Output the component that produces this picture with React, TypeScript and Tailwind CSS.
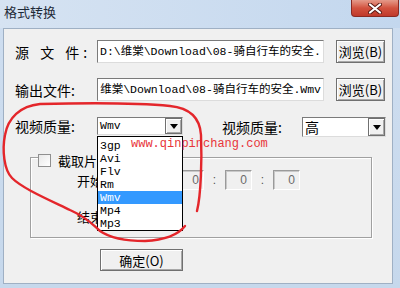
import React from 'react'

const cjk = "font-['Noto_Sans_CJK_SC',sans-serif]"
const mono = "font-['Liberation_Mono','Noto_Sans_CJK_SC',monospace]"
const sunken = 'border border-t-[#7a7a7a] border-l-[#7a7a7a] border-r-[#dcdcdc] border-b-[#dcdcdc] bg-white'
const raised = 'border border-[#707070] bg-[#f0f0f0] shadow-[inset_1px_1px_0_#ffffff,inset_-1px_-1px_0_#a8a8a8]'

const formats = ['3gp', 'Avi', 'Flv', 'Rm', 'Wmv', 'Mp4', 'Mp3']

function Arrow() {
  return (
    <div className={`${raised} w-[17px] h-full flex items-center justify-center`}>
      <svg width="8" height="5" viewBox="0 0 8 5">
        <path d="M0 0 H8 L4 5 Z" fill="#000" />
      </svg>
    </div>
  )
}

function TimeBox() {
  return (
    <div className="w-[27px] h-[20px] border border-t-[#9a9a9a] border-l-[#9a9a9a] border-r-white border-b-white shadow-[inset_1px_1px_0_#c8c8c8] flex items-center justify-end pr-[4px] text-[12px] leading-none text-[#6a6a6a] font-['Liberation_Sans',sans-serif]">
      0
    </div>
  )
}

function Colon() {
  return <span className="w-[21px] text-center text-[12px] text-[#555] font-['Liberation_Sans',sans-serif]">:</span>
}

export default function App() {
  return (
    <div className="relative w-[400px] h-[288px] overflow-hidden bg-gradient-to-b from-[#cfdef0] to-[#c6d8ec]">
      {/* Title bar */}
      <div className="h-[28px] flex items-start justify-between bg-gradient-to-r from-[#d6e3f2] to-[#c3d7ee]">
        <span className={`${cjk} text-[13px] leading-[24px] pl-[4px] text-[#1e2a38]`}>格式转换</span>
        <div className="w-[48px] h-[17px] mr-[1px] rounded-b-[4px] border border-t-0 border-[#8a2a22] bg-gradient-to-b from-[#e49a8a] via-[#d2523f] to-[#c0392b] flex items-center justify-center">
          <svg width="14" height="11" viewBox="0 0 14 11">
            <path d="M2 1.5 L12 9.5 M12 1.5 L2 9.5" stroke="#5a1a14" strokeWidth="4" strokeLinecap="round" />
            <path d="M2 1.5 L12 9.5 M12 1.5 L2 9.5" stroke="#fff" strokeWidth="2.2" strokeLinecap="round" />
          </svg>
        </div>
      </div>

      {/* Client area */}
      <div className="ml-[3px] w-[390px] h-[256px] border border-[#9fb0c4] bg-[#f0f0f0] text-black">
        {/* Source file */}
        <div className="mt-[11px] flex items-center h-[23px]">
          <span className={`${cjk} w-[82px] ml-[11px] text-[14px] leading-none tracking-[4px]`}>源 文 件:</span>
          <div className={`${sunken} w-[227px] h-full flex items-center pl-[2px] overflow-hidden whitespace-nowrap`}>
            <span className={`${mono} text-[11.5px] leading-none`}>D:\维棠\Download\08-骑自行车的安全.</span>
          </div>
          <button className={`${raised} ${cjk} ml-[12px] w-[49px] h-full text-[13px] leading-none`}>浏览(B)</button>
        </div>

        {/* Output file */}
        <div className="mt-[15px] flex items-center h-[23px]">
          <span className={`${cjk} w-[82px] ml-[11px] text-[14px] leading-none`}>输出文件:</span>
          <div className={`${sunken} w-[227px] h-full flex items-center justify-end pr-[2px] overflow-hidden whitespace-nowrap`}>
            <span className={`${mono} text-[11.5px] leading-none`}>维棠\Download\08-骑自行车的安全.Wmv</span>
          </div>
          <button className={`${raised} ${cjk} ml-[12px] w-[49px] h-full text-[13px] leading-none`}>浏览(B)</button>
        </div>

        {/* Quality row */}
        <div className="mt-[16px] flex items-start">
          <span className={`${cjk} w-[82px] ml-[11px] h-[18px] flex items-center text-[14px] leading-none`}>视频质量:</span>
          <div className="relative">
            <div className={`${sunken} w-[86px] h-[18px] flex items-center justify-between pl-[2px]`}>
              <span className={`${mono} text-[11.5px] leading-none`}>Wmv</span>
              <Arrow />
            </div>
            {/* open dropdown */}
            <div className="absolute left-0 top-[19px] z-10 w-[86px] h-[95px] border border-black bg-white pt-[2px]">
              {formats.map((f) => (
                <div
                  key={f}
                  className={`${mono} h-[13px] pl-[2px] text-[11.5px] leading-[13px] ${f === 'Wmv' ? 'bg-[#3399ff] text-white' : 'text-black'}`}
                >
                  {f}
                </div>
              ))}
            </div>
          </div>
          <span className={`${cjk} w-[80px] ml-[39px] h-[20px] flex items-center text-[14px] leading-none`}>视频质量:</span>
          <div className={`${sunken} w-[84px] h-[20px] flex items-center justify-between pl-[2px]`}>
            <span className={`${cjk} text-[14px] leading-none`}>高</span>
            <Arrow />
          </div>
        </div>

        {/* Clip group */}
        <div className="mt-[20px] ml-[26px] w-[342px] h-[81px] border border-[#a0a0a0] shadow-[inset_1px_1px_0_#ffffff,1px_1px_0_#ffffff]">
          <div className="-mt-[4px] ml-[7px] flex items-center h-[13px] w-fit bg-[#f0f0f0] pr-[2px]">
            <div className="w-[13px] h-[13px] border border-[#8f8f8f] bg-gradient-to-br from-[#e8e8e8] to-white" />
            <span className={`${cjk} ml-[7px] text-[13px] leading-none`}>截取片段</span>
          </div>
          <div className="mt-[3px] flex items-center h-[20px]">
            <span className={`${cjk} ml-[46px] w-[52px] text-[13px] leading-none whitespace-nowrap`}>开始时间:</span>
            <TimeBox />
            <Colon />
            <TimeBox />
            <Colon />
            <TimeBox />
            <Colon />
            <TimeBox />
          </div>
          <div className="mt-[16px] flex items-center h-[20px]">
            <span className={`${cjk} ml-[46px] text-[13px] leading-none whitespace-nowrap`}>结束时间:</span>
          </div>
        </div>

        <button className={`${raised} ${cjk} mt-[11px] ml-[96px] w-[83px] h-[22px] text-[13px] leading-none`}>确定(O)</button>
      </div>

      {/* Watermark */}
      <span className={`absolute left-[131px] top-[137px] z-20 font-['Liberation_Mono',monospace] text-[12px] leading-[14px] text-[#e8353a]`}>
        www.qinpinchang.com
      </span>

      {/* Hand-drawn red circle */}
      <svg className="absolute inset-0 z-30 pointer-events-none" width="400" height="288" viewBox="0 0 400 288">
        <path
          d="M197 211 C201 195 202 160 201 135 C200 118 190 108 170 106 C140 103 80 103 40 104 C20 106 8 118 5 135 C2 150 4 170 12 178 C22 188 45 198 70 210 C88 218 93 225 100 231 C110 238 125 241 145 241 C165 240 178 235 185 226"
          fill="none"
          stroke="#e4262b"
          strokeWidth="2.4"
          strokeLinecap="round"
        />
      </svg>
    </div>
  )
}
